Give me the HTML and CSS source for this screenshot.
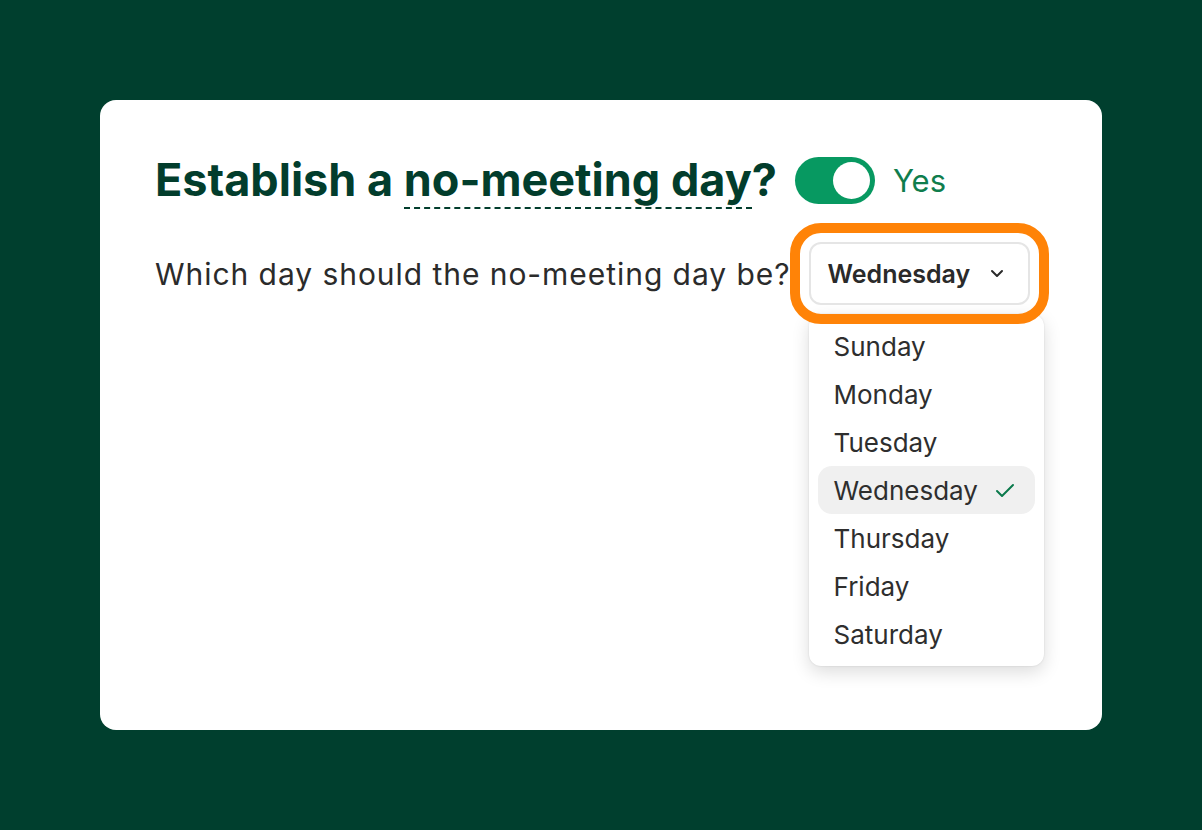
FILE: index.html
```html
<!DOCTYPE html>
<html lang="en">
  <head>
    <meta charset="UTF-8" />
    <link rel="stylesheet" href="styles.css">
  </head>
  <body>
    <div class="card">
      <div class="title-row">
        <h1 class="title">Establish a <span class="term">no-meeting day</span>?</h1>
        <label class="switch">
          <input type="checkbox" checked />
          <span class="slider"></span>
        </label>
        <span class="switch-label">Yes</span>
      </div>
      <div class="question-row">
        <span class="question">Which day should the no-meeting day be?</span>
        <div class="select-wrap">
          <button class="select">
            <span>Wednesday</span>
            <svg class="chevron" width="14" height="9" viewBox="0 0 14 9">
              <path d="M2 2l5 5 5-5" fill="none" stroke="#2a2a2a" stroke-width="2" stroke-linecap="round" stroke-linejoin="round" />
            </svg>
          </button>
          <ul class="menu">
            <li class="option">Sunday</li>
            <li class="option">Monday</li>
            <li class="option">Tuesday</li>
            <li class="option selected">
              Wednesday
              <svg class="check" width="20" height="15" viewBox="0 0 20 15">
                <path d="M2 8l5 5L18 2" fill="none" stroke="#0b7a4c" stroke-width="2" stroke-linecap="round" stroke-linejoin="round" />
              </svg>
            </li>
            <li class="option">Thursday</li>
            <li class="option">Friday</li>
            <li class="option">Saturday</li>
          </ul>
        </div>
      </div>
    </div>
  </body>
</html>
```

FILE: styles.css
```css
body {
  margin: 0;
  background-color: #003f2e;
  font-family: Inter, "Noto Sans", sans-serif;
  padding: 100px;
}
.card {
  box-sizing: border-box;
  width: 1002px;
  height: 630px;
  background-color: white;
  border-radius: 16px;
  padding: 52px 55px;
}
.title-row {
  display: flex;
  align-items: center;
  gap: 18px;
}
.title {
  margin: 0;
  font-size: 45px;
  font-weight: 700;
  color: #023d2c;
  line-height: 56px;
}
.term {
  border-bottom: 2px dashed #023d2c;
}
.switch {
  position: relative;
  display: inline-block;
  width: 80px;
  height: 47px;
}
.switch input {
  display: none;
}
.slider {
  position: absolute;
  top: 0;
  left: 0;
  right: 0;
  bottom: 0;
  border-radius: 24px;
  background-color: #ccc;
}
.slider:before {
  position: absolute;
  content: "";
  width: 37px;
  height: 37px;
  left: 5px;
  top: 5px;
  border-radius: 50%;
  background-color: white;
}
input:checked + .slider {
  background-color: #079961;
}
input:checked + .slider:before {
  transform: translateX(33px);
}
.switch-label {
  font-size: 31px;
  color: #0f7d4d;
}
.question-row {
  display: flex;
  align-items: center;
  margin-top: 34px;
}
.question {
  font-size: 30px;
  color: #2b2b2b;
  letter-spacing: 0.95px;
}
.select-wrap {
  position: relative;
  margin-left: 18px;
}
.select {
  position: relative;
  z-index: 20;
  box-sizing: border-box;
  display: flex;
  align-items: center;
  justify-content: space-between;
  width: 221px;
  height: 63px;
  padding: 0 24px 0 17px;
  background-color: white;
  border: 2px solid #e5e5e5;
  border-radius: 12px;
  font-family: Inter, "Noto Sans", sans-serif;
  font-size: 25px;
  font-weight: 600;
  color: #2a2a2a;
  outline: 10px solid #ff8307;
  outline-offset: 9px;
}
.menu {
  position: absolute;
  z-index: 10;
  top: 72px;
  left: 0;
  width: 235px;
  box-sizing: border-box;
  margin: 0;
  padding: 8px 9px;
  list-style: none;
  background-color: white;
  border-radius: 12px;
  box-shadow: 0 6px 18px rgba(0, 0, 0, 0.14), 0 0 2px rgba(0, 0, 0, 0.12);
}
.option {
  display: flex;
  align-items: center;
  justify-content: space-between;
  height: 48px;
  padding: 0 20px 0 16px;
  border-radius: 14px;
  font-size: 26px;
  color: #2e2e2e;
}
.selected {
  background-color: #f0f0f0;
}
```
